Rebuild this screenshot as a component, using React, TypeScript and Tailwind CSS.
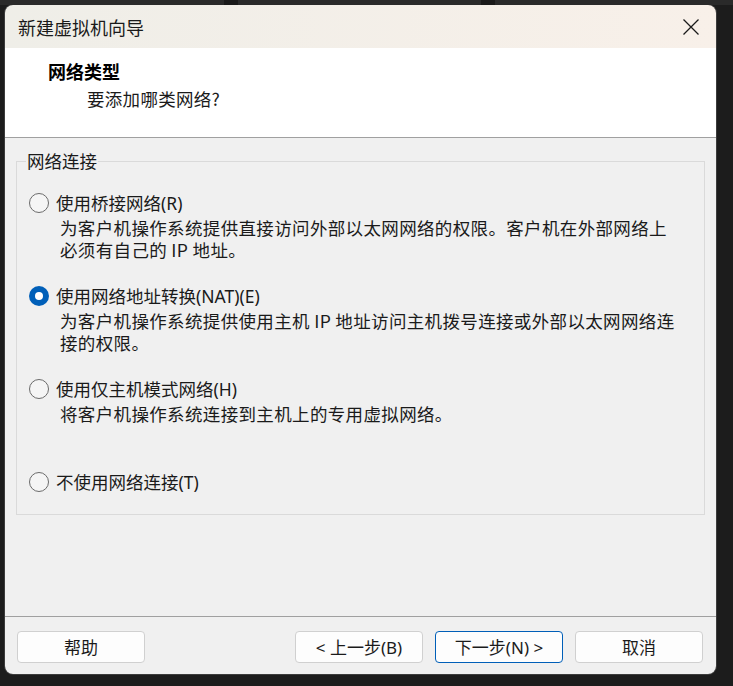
import React, { useState } from 'react';

const FONT = '"Noto Sans CJK SC", "Noto Sans", sans-serif';
const UI_FONT = '"Noto Sans", "Noto Sans CJK SC", sans-serif';

interface NetOption {
  id: string;
  label: string;
  lines: string[];
}

const options: NetOption[] = [
  {
    id: 'bridged',
    label: '使用桥接网络(R)',
    lines: ['为客户机操作系统提供直接访问外部以太网网络的权限。客户机在外部网络上', '必须有自己的 IP 地址。'],
  },
  {
    id: 'nat',
    label: '使用网络地址转换(NAT)(E)',
    lines: ['为客户机操作系统提供使用主机 IP 地址访问主机拨号连接或外部以太网网络连', '接的权限。'],
  },
  {
    id: 'hostonly',
    label: '使用仅主机模式网络(H)',
    lines: ['将客户机操作系统连接到主机上的专用虚拟网络。', ''],
  },
  {
    id: 'none',
    label: '不使用网络连接(T)',
    lines: [],
  },
];

const Radio: React.FC<{ checked: boolean }> = ({ checked }) =>
  checked ? (
    <span className="w-[20px] h-[20px] rounded-full bg-[#005fb8] flex items-center justify-center shrink-0">
      <span className="w-[8px] h-[8px] rounded-full bg-white" />
    </span>
  ) : (
    <span className="w-[20px] h-[20px] rounded-full border border-[#6b6b6b] bg-[#f5f5f5] shrink-0" />
  );

const WizButton: React.FC<{ children: React.ReactNode; primary?: boolean }> = ({ children, primary }) => (
  <button
    style={{ fontFamily: UI_FONT }}
    className={
      primary
        ? 'w-[128px] h-[32px] rounded-[4px] border border-[#005fb8] bg-[#fdfdfd] text-[17px] text-[#1b1b1b] leading-none'
        : 'w-[128px] h-[32px] rounded-[4px] border border-[#d0d0d0] bg-[#fdfdfd] text-[17px] text-[#1b1b1b] leading-none'
    }
  >
    {children}
  </button>
);

export default function App() {
  const [selected, setSelected] = useState('nat');

  return (
    <div className="w-[733px] h-[686px] bg-[#1c1c1c] overflow-hidden" style={{ fontFamily: FONT }}>
      <div className="flex h-[5px]">
        <div className="w-[224px] bg-[#2a2a2a]" />
        <div className="w-[14px] bg-[#1a1a1a]" />
        <div className="w-[243px] bg-[#2a2a2a]" />
        <div className="w-[14px] bg-[#1a1a1a]" />
        <div className="flex-1 bg-[#2a2a2a]" />
      </div>
      <div className="pl-[5px]">
        <div className="w-[711px] h-[669px] rounded-[8px] overflow-hidden flex flex-col shadow-[0_0_0_1px_#3c3c3c]">
          {/* title bar */}
          <div className="h-[43px] shrink-0 flex items-center justify-between bg-gradient-to-r from-[#efeee8] to-[#f8f0e9]">
            <span className="pl-[13px] text-[18px] text-[#1a1a1a] leading-none">新建虚拟机向导</span>
            <span className="w-[46px] h-[43px] mr-[2px] flex items-center justify-center">
              <svg width="16" height="16" viewBox="0 0 16 16">
                <path d="M0.5 0.5 L15.5 15.5 M15.5 0.5 L0.5 15.5" stroke="#1a1a1a" strokeWidth="1.3" fill="none" />
              </svg>
            </span>
          </div>

          {/* header */}
          <div className="h-[90px] shrink-0 bg-white border-b border-[#a0a0a0] pt-[11px]">
            <div className="pl-[43px] text-[18px] font-bold leading-[24px] text-black">网络类型</div>
            <div className="pl-[82px] mt-[4px] text-[17.5px] tracking-[0.3px] leading-[24px] text-[#1a1a1a]">要添加哪类网络?</div>
          </div>

          {/* body */}
          <div className="flex-1 bg-[#f0f0f0] pt-[23px] pl-[11px]">
            <div className="relative w-[689px] h-[354px] border border-[#dadada] pt-[29px] pl-[12px]">
              <span className="absolute left-[9px] top-[-13px] px-[1px] bg-[#f0f0f0] text-[17.5px] leading-[24px] text-[#1a1a1a]">
                网络连接
              </span>
              <div className="flex flex-col gap-[23px]">
                {options.map((o) => (
                  <div key={o.id} className="flex flex-col">
                    <label
                      className="h-[24px] flex items-center gap-[7px] cursor-default"
                      onClick={() => setSelected(o.id)}
                    >
                      <Radio checked={selected === o.id} />
                      <span
                        className="text-[17.5px] leading-[24px] text-[#1a1a1a] whitespace-nowrap"
                        style={{ fontFamily: UI_FONT }}
                      >
                        {o.label}
                      </span>
                    </label>
                    {o.lines.length > 0 && (
                      <div className="mt-[2px] ml-[31px] text-[17.5px] tracking-[0.35px] leading-[22px] text-[#1a1a1a] whitespace-nowrap">
                        {o.lines.map((l, i) => (
                          <div key={i} className="h-[22px]">
                            {l}
                          </div>
                        ))}
                      </div>
                    )}
                  </div>
                ))}
              </div>
            </div>
          </div>

          {/* footer */}
          <div className="h-[58px] shrink-0 bg-[#f0f0f0] border-t border-[#a0a0a0] pt-[14px] pl-[12px] pr-[13px] flex items-start">
            <WizButton>帮助</WizButton>
            <div className="flex-1" />
            <div className="flex gap-[12px]">
              <WizButton>&lt; 上一步(B)</WizButton>
              <WizButton primary>下一步(N) &gt;</WizButton>
              <WizButton>取消</WizButton>
            </div>
          </div>
        </div>
      </div>
    </div>
  );
}
